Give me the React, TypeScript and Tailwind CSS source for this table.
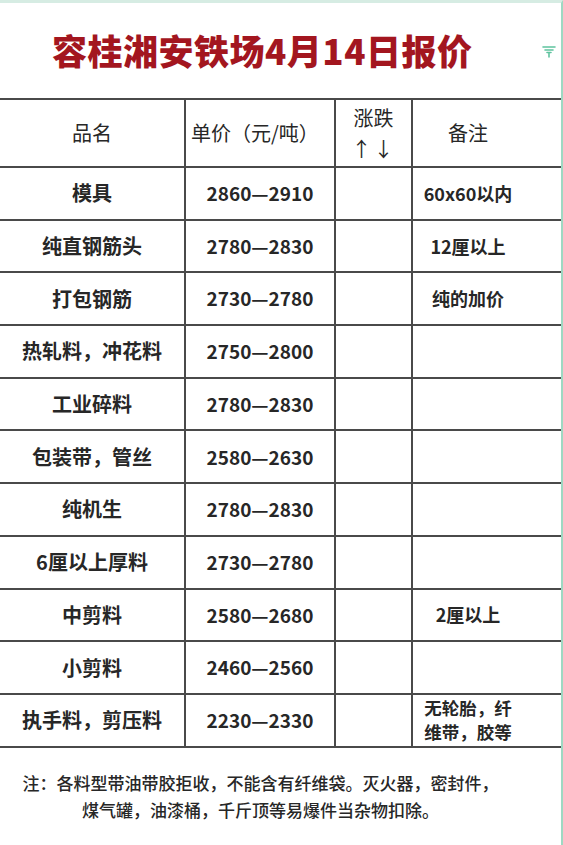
const rows = [
  { name: "模具", price: "2860—2910", note: "60x60以内" },
  { name: "纯直钢筋头", price: "2780—2830", note: "12厘以上" },
  { name: "打包钢筋", price: "2730—2780", note: "纯的加价" },
  { name: "热轧料，冲花料", price: "2750—2800", note: "" },
  { name: "工业碎料", price: "2780—2830", note: "" },
  { name: "包装带，管丝", price: "2580—2630", note: "" },
  { name: "纯机生", price: "2780—2830", note: "" },
  { name: "6厘以上厚料", price: "2730—2780", note: "" },
  { name: "中剪料", price: "2580—2680", note: "2厘以上" },
  { name: "小剪料", price: "2460—2560", note: "" },
  { name: "执手料，剪压料", price: "2230—2330", note: "multi" },
];

function FilterIcon() {
  return (
    <svg width="14" height="14" viewBox="0 0 14 14">
      <path d="M1 3h12M3 6h8M5 8.5h4M7 8.5v4.5" stroke="#5fc39f" strokeWidth="1.6" strokeLinecap="round" fill="none" />
    </svg>
  );
}

export default function App() {
  return (
    <div
      className="w-[563px] h-[845px] bg-white border-t-[3px] border-t-[#d6ece3] border-r-[2px] border-r-[#9fd8c2] flex flex-col text-[#272727]"
      style={{ fontFamily: '"Noto Sans CJK SC", "Noto Sans", sans-serif' }}
    >
      <div className="h-[95px] flex items-center pl-[52px] pr-[5px]">
        <h1 className="text-[35px] font-black text-[#a3161f] tracking-[0.5px] leading-none -mt-[2px]">容桂湘安铁场4月14日报价</h1>
        <div className="ml-auto">
          <FilterIcon />
        </div>
      </div>

      <div className="grid grid-cols-[186px_150px_77px_1fr] h-[70px] border-y-2 border-[#4a4a4a] text-[20px]">
        <div className="border-r-2 border-[#4a4a4a] flex items-center justify-center">品名</div>
        <div className="border-r-2 border-[#4a4a4a] flex items-center pl-[5px]">单价（元/吨）</div>
        <div className="border-r-2 border-[#4a4a4a] flex flex-col items-center justify-center leading-[31px]">
          <span>涨跌</span>
          <span className="tracking-[2px]">↑↓</span>
        </div>
        <div className="flex items-center justify-center pr-[38px]">备注</div>
      </div>

      {rows.map((r) => (
        <div key={r.name} className="grid grid-cols-[186px_150px_77px_1fr] h-[52.7px] border-b-2 border-[#4a4a4a] font-bold">
          <div className="border-r-2 border-[#4a4a4a] flex items-center justify-center text-[20px]">{r.name}</div>
          <div className="border-r-2 border-[#4a4a4a] flex items-center justify-center text-[19px]">{r.price}</div>
          <div className="border-r-2 border-[#4a4a4a]"></div>
          {r.note === "multi" ? (
            <div className="flex flex-col items-center justify-center pr-[38px] text-[17.5px] leading-[24px]">
              <span>无轮胎，纤</span>
              <span>维带，胶等</span>
            </div>
          ) : (
            <div className="flex items-center justify-center pr-[38px] text-[18px]">{r.note}</div>
          )}
        </div>
      ))}

      <div className="flex-1 pt-[21px] pr-[40px] text-center text-[17px] font-medium leading-[27px]">
        注：各料型带油带胶拒收，不能含有纤维袋。灭火器，密封件，
        <br />
        煤气罐，油漆桶，千斤顶等易爆件当杂物扣除。
      </div>
    </div>
  );
}
